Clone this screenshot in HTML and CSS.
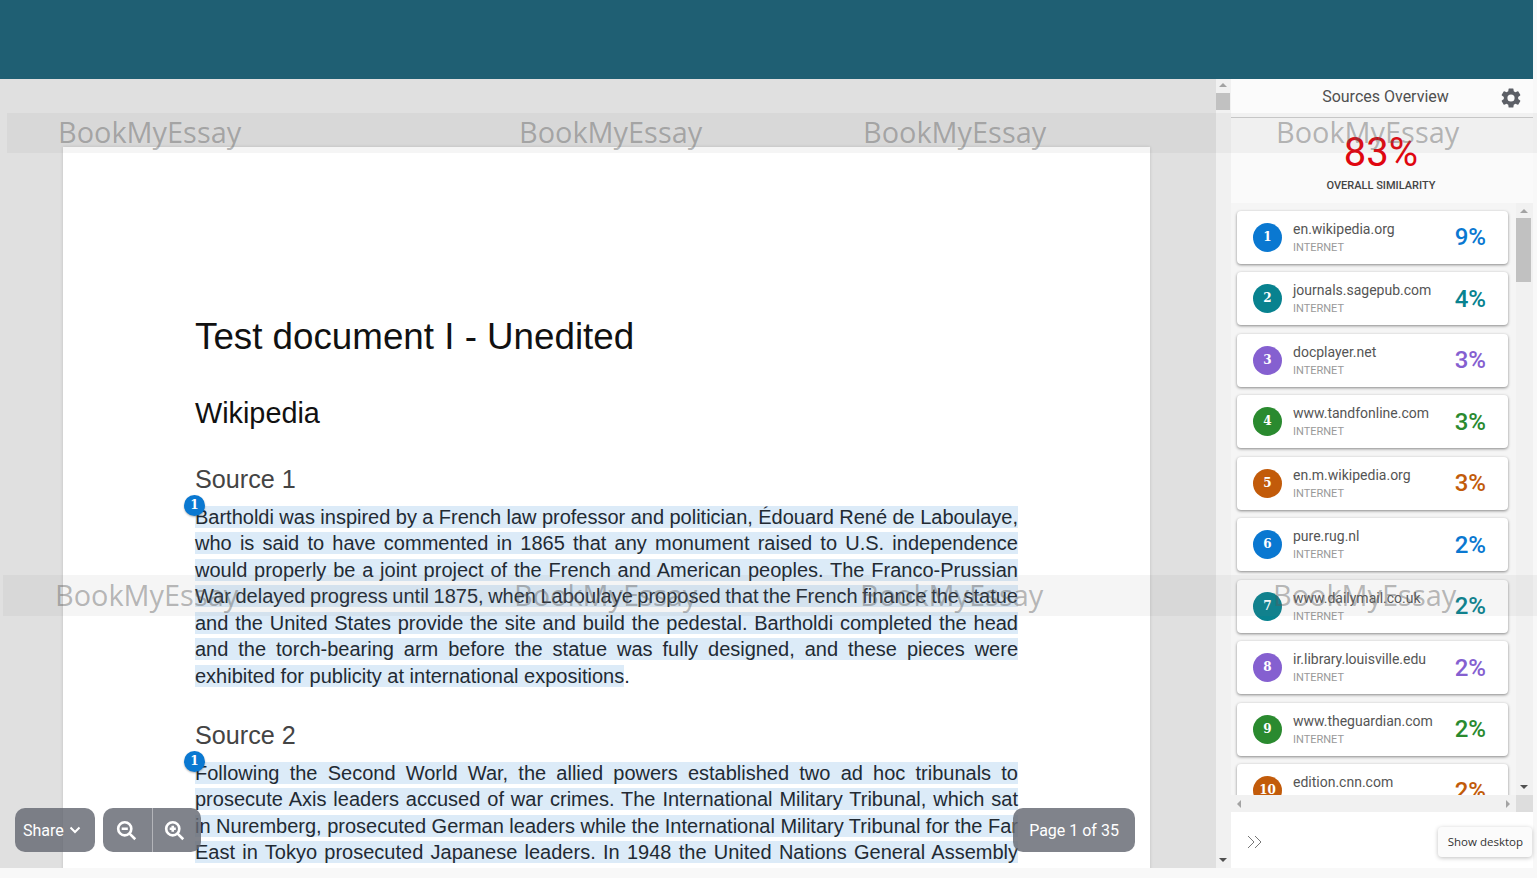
FILE: index.html
```html
<!DOCTYPE html>
<html lang="en">
<head>
<meta charset="utf-8">
<title>Sources Overview</title>
<link rel="stylesheet" href="styles.css">
</head>
<body>
<div class="app">
  <header class="topbar"></header>
  <main class="workspace">
    <section class="viewer">
      <article class="paper">
        <h1 class="title">Test document I - Unedited</h1>
        <h2 class="subtitle">Wikipedia</h2>
        <h3 class="source-head">Source 1</h3>
        <div class="para">
          <span class="badge">1</span>
          <div class="line snug"><span class="hl">Bartholdi was inspired by a French law professor and politician, Édouard René de Laboulaye,</span></div>
          <div class="line"><span class="hl">who is said to have commented in 1865 that any monument raised to U.S. independence</span></div>
          <div class="line"><span class="hl">would properly be a joint project of the French and American peoples. The Franco-Prussian</span></div>
          <div class="line tight"><span class="hl">War delayed progress until 1875, when Laboulaye proposed that the French finance the statue</span></div>
          <div class="line"><span class="hl">and the United States provide the site and build the pedestal. Bartholdi completed the head</span></div>
          <div class="line"><span class="hl">and the torch-bearing arm before the statue was fully designed, and these pieces were</span></div>
          <div class="line last"><span class="hl">exhibited for publicity at international expositions</span>.</div>
        </div>
        <h3 class="source-head second">Source 2</h3>
        <div class="para">
          <span class="badge">1</span>
          <div class="line"><span class="hl">Following the Second World War, the allied powers established two ad hoc tribunals to</span></div>
          <div class="line"><span class="hl">prosecute Axis leaders accused of war crimes. The International Military Tribunal, which sat</span></div>
          <div class="line snug"><span class="hl">in Nuremberg, prosecuted German leaders while the International Military Tribunal for the Far</span></div>
          <div class="line"><span class="hl">East in Tokyo prosecuted Japanese leaders. In 1948 the United Nations General Assembly</span></div>
        </div>
      </article>
    </section>
    <div class="vbar main-bar">
      <span class="arrow up"></span>
      <span class="thumb main-thumb"></span>
      <span class="spacer"></span>
      <span class="arrow down"></span>
    </div>
    <aside class="sidebar">
      <div class="side-head">
        <span class="side-title">Sources Overview</span>
        <svg class="gear" viewBox="0 0 24 24" aria-hidden="true"><path d="M19.14 12.94c.04-.3.06-.61.06-.94s-.02-.64-.07-.94l2.03-1.58a.49.49 0 0 0 .12-.61l-1.92-3.32a.49.49 0 0 0-.59-.22l-2.39.96a7 7 0 0 0-1.62-.94l-.36-2.54a.48.48 0 0 0-.48-.41h-3.84a.48.48 0 0 0-.47.41l-.36 2.54c-.59.24-1.13.57-1.62.94l-2.39-.96a.49.49 0 0 0-.59.22L2.73 8.87a.48.48 0 0 0 .12.61l2.03 1.58c-.05.3-.08.63-.08.94s.02.64.07.94l-2.03 1.58a.49.49 0 0 0-.12.61l1.92 3.32c.12.22.37.29.59.22l2.39-.96c.5.38 1.03.7 1.62.94l.36 2.54c.05.24.24.41.48.41h3.84c.24 0 .44-.17.47-.41l.36-2.54c.59-.24 1.13-.56 1.62-.94l2.39.96c.22.08.47 0 .59-.22l1.92-3.32a.48.48 0 0 0-.12-.61zM12 15.6A3.6 3.6 0 1 1 12 8.4a3.6 3.6 0 0 1 0 7.2z"/></svg>
      </div>
      <div class="summary">
        <div class="score">83%</div>
        <div class="score-label">OVERALL SIMILARITY</div>
      </div>
      <div class="list-wrap">
        <div class="list">
          <div class="card c-blue"><span class="num">1</span><div class="info"><div class="domain">en.wikipedia.org</div><div class="kind">INTERNET</div></div><span class="pct">9%</span></div>
          <div class="card c-teal"><span class="num">2</span><div class="info"><div class="domain">journals.sagepub.com</div><div class="kind">INTERNET</div></div><span class="pct">4%</span></div>
          <div class="card c-purple"><span class="num">3</span><div class="info"><div class="domain">docplayer.net</div><div class="kind">INTERNET</div></div><span class="pct">3%</span></div>
          <div class="card c-green"><span class="num">4</span><div class="info"><div class="domain">www.tandfonline.com</div><div class="kind">INTERNET</div></div><span class="pct">3%</span></div>
          <div class="card c-orange"><span class="num">5</span><div class="info"><div class="domain">en.m.wikipedia.org</div><div class="kind">INTERNET</div></div><span class="pct">3%</span></div>
          <div class="card c-blue"><span class="num">6</span><div class="info"><div class="domain">pure.rug.nl</div><div class="kind">INTERNET</div></div><span class="pct">2%</span></div>
          <div class="card c-teal"><span class="num">7</span><div class="info"><div class="domain">www.dailymail.co.uk</div><div class="kind">INTERNET</div></div><span class="pct">2%</span></div>
          <div class="card c-purple"><span class="num">8</span><div class="info"><div class="domain">ir.library.louisville.edu</div><div class="kind">INTERNET</div></div><span class="pct">2%</span></div>
          <div class="card c-green"><span class="num">9</span><div class="info"><div class="domain">www.theguardian.com</div><div class="kind">INTERNET</div></div><span class="pct">2%</span></div>
          <div class="card c-orange"><span class="num">10</span><div class="info"><div class="domain">edition.cnn.com</div><div class="kind">INTERNET</div></div><span class="pct">2%</span></div>
        </div>
        <div class="vbar list-bar">
          <span class="arrow up"></span>
          <span class="thumb list-thumb"></span>
          <span class="spacer"></span>
          <span class="arrow down"></span>
        </div>
        <div class="hbar">
          <span class="arrow left"></span>
          <span class="spacer"></span>
          <span class="arrow right"></span>
        </div>
        <div class="corner"></div>
      </div>
      <div class="side-foot">
        <svg class="collapse" viewBox="0 0 16 14" aria-hidden="true"><path d="M1 1l6 6-6 6M8 1l6 6-6 6"/></svg>
        <span class="show-desktop">Show desktop</span>
      </div>
    </aside>
  </main>
</div>

<div class="band band-top">
  <span class="mark m1">BookMyEssay</span>
  <span class="mark m2">BookMyEssay</span>
  <span class="mark m3">BookMyEssay</span>
  <span class="mark m4">BookMyEssay</span>
</div>
<div class="band band-mid">
  <span class="mark n1">BookMyEssay</span>
  <span class="mark n2">BookMyEssay</span>
  <span class="mark n3">BookMyEssay</span>
  <span class="mark n4">BookMyEssay</span>
</div>

<div class="float share">Share
  <svg class="chev" viewBox="0 0 12 8" aria-hidden="true"><path d="M1.5 1.5L6 6l4.5-4.5"/></svg>
</div>
<div class="float zoom">
  <span class="zoom-btn">
    <svg viewBox="0 0 24 24" aria-hidden="true"><circle cx="10" cy="10" r="7.5"/><path d="M15.5 15.5L22 22M6.5 10h7"/></svg>
  </span>
  <span class="zoom-btn divided">
    <svg viewBox="0 0 24 24" aria-hidden="true"><circle cx="10" cy="10" r="7.5"/><path d="M15.5 15.5L22 22M6.5 10h7M10 6.5v7"/></svg>
  </span>
</div>
<div class="float pager">Page 1 of 35</div>
</body>
</html>
```

FILE: styles.css
```css
* { box-sizing: border-box; }

html, body {
  margin: 0;
  height: 100%;
  overflow: hidden;
  background: #f8f8f8;
  font-family: Roboto, "Liberation Sans", sans-serif;
}

.app {
  width: 1533px;
  height: 868px;
  display: flex;
  flex-direction: column;
}

.topbar {
  height: 79px;
  flex: none;
  background: #1f5f73;
}

.workspace {
  flex: 1;
  min-height: 0;
  display: flex;
}

/* document */
.viewer {
  width: 1216px;
  flex: none;
  background: #e0e0e0;
  padding: 68px 66px 0 63px;
  overflow: hidden;
}

.paper {
  width: 1087px;
  height: 800px;
  background: #fff;
  padding: 168px 132px 0;
  font-family: "Liberation Sans", Arial, sans-serif;
  box-shadow: 0 0 3px rgba(0, 0, 0, .15);
}

.title {
  margin: 0;
  font-size: 36.75px;
  line-height: 44px;
  font-weight: 400;
  color: #111;
}

.subtitle {
  margin: 36px 0 0;
  font-size: 28.8px;
  line-height: 36px;
  font-weight: 400;
  color: #111;
}

.source-head {
  margin: 32px 0 0;
  font-size: 25.2px;
  line-height: 32px;
  font-weight: 400;
  color: #444;
}

.source-head.second {
  margin-top: 29.5px;
}

.para {
  position: relative;
  margin: 8.8px 0 0;
  font-size: 20px;
  line-height: 26.5px;
  color: #222a33;
}

.line {
  white-space: nowrap;
  text-align: justify;
  text-align-last: justify;
}

.line.last { text-align-last: left; }
.line.snug { word-spacing: -.6px; }
.line.tight { word-spacing: -1.8px; }

.hl {
  background: #dcebf8;
}

.badge {
  position: absolute;
  left: -11px;
  top: -9px;
  width: 21px;
  height: 21px;
  border-radius: 50%;
  background: #0a78d1;
  color: #fff;
  font: 700 12px/20px "DejaVu Serif", serif;
  text-align: center;
  box-shadow: 0 1px 2px rgba(0, 0, 0, .3);
}

/* scrollbars */
.vbar {
  display: flex;
  flex-direction: column;
  align-items: center;
  background: #f1f1f1;
}

.main-bar {
  width: 15px;
  flex: none;
  padding: 4px 1px 6px 0;
}

.spacer { flex: 1; }

.arrow {
  width: 0;
  height: 0;
  flex: none;
  border: 4px solid transparent;
}

.arrow.up { border-top: 0; border-bottom: 4px solid #a3a3a3; }
.arrow.down { border-bottom: 0; border-top: 4px solid #505050; }
.arrow.left { border-left: 0; border-right: 4px solid #a3a3a3; }
.arrow.right { border-right: 0; border-left: 4px solid #a3a3a3; }

.thumb {
  flex: none;
  width: 100%;
  background: #c1c1c1;
}

.main-thumb { height: 17px; margin-top: 6px; }

/* sidebar */
.sidebar {
  flex: 1;
  min-width: 0;
  display: flex;
  flex-direction: column;
  background: #fafafa;
}

.side-head {
  height: 39px;
  flex: none;
  display: flex;
  align-items: center;
  padding: 0 10px 0 41px;
  background: #fbfbfb;
  border-bottom: 1px solid #ccc;
}

.side-title {
  flex: 1;
  margin-bottom: 4px;
  text-align: center;
  font-size: 16px;
  color: #505050;
}

.gear {
  width: 24px;
  height: 24px;
  fill: #5c5f66;
}

.summary {
  height: 85px;
  flex: none;
  padding-right: 2px;
  text-align: center;
}

.score {
  padding-top: 12px;
  font-size: 40px;
  line-height: 46px;
  color: #e0060f;
}

.score-label {
  margin-top: 3px;
  font-size: 11px;
  line-height: 14px;
  font-weight: 500;
  color: #444;
}

.list-wrap {
  flex: 1;
  min-height: 0;
  display: grid;
  grid-template-columns: 1fr 17px;
  grid-template-rows: minmax(0, 1fr) 17px;
  background: #f5f5f5;
}

.list {
  overflow: hidden;
  display: flex;
  flex-direction: column;
  gap: 8.5px;
  padding: 7.8px 8px 0 6px;
}

.card {
  flex: none;
  height: 53px;
  display: flex;
  align-items: center;
  padding: 0 22px 0 16px;
  background: #fff;
  border-radius: 4px;
  box-shadow: 0 1px 3px rgba(0, 0, 0, .45);
}

.num {
  width: 29px;
  height: 29px;
  flex: none;
  border-radius: 50%;
  color: #fff;
  font: 700 12px/28px "DejaVu Serif", serif;
  text-align: center;
}

.info {
  flex: 1;
  min-width: 0;
  margin-left: 11px;
}

.domain {
  font-size: 14px;
  line-height: 18px;
  color: #555;
}

.kind {
  font-size: 11px;
  line-height: 15px;
  margin-top: 2px;
  color: #999;
}

.pct {
  font-size: 24px;
  line-height: 30px;
  font-weight: 500;
}

.c-blue .num { background: #0a78d1; }
.c-blue .pct { color: #0a78d1; }
.c-teal .num { background: #08828f; }
.c-teal .pct { color: #08828f; }
.c-purple .num { background: #8560d0; }
.c-purple .pct { color: #8560d0; }
.c-green .num { background: #2a8a2f; }
.c-green .pct { color: #2a8a2f; }
.c-orange .num { background: #c25b0a; }
.c-orange .pct { color: #c25b0a; }

.list-bar {
  padding: 6px 2px 6px 0;
}

.list-thumb {
  height: 64px;
  margin-top: 5px;
}

.hbar {
  display: flex;
  align-items: center;
  padding: 0 6px;
  background: #f1f1f1;
}

.corner { background: #ddd; }

.side-foot {
  height: 56px;
  flex: none;
  display: flex;
  align-items: center;
  justify-content: space-between;
  padding: 4px 1px 0 16px;
  background: #fff;
}

.collapse {
  width: 16px;
  height: 14px;
  fill: none;
  stroke: #777;
  stroke-width: 1;
}

.show-desktop {
  height: 30px;
  padding: 0 9px 0 10px;
  font: 11.5px/30px "Open Sans", "Noto Sans", sans-serif;
  color: #333;
  background: #fbfbfb;
  border-radius: 4px;
  box-shadow: 0 1px 4px rgba(0, 0, 0, .25);
}

/* watermark overlays */
.band {
  position: absolute;
  right: 0;
  background: rgba(130, 130, 130, .08);
  pointer-events: none;
}

.band-top { top: 113px; left: 7px; height: 40px; }
.band-mid { top: 575px; left: 3px; height: 41px; }

.mark {
  position: absolute;
  top: 0;
  font: 28.9px/38px "Open Sans", "Noto Sans", sans-serif;
  color: rgba(90, 90, 90, .42);
  white-space: nowrap;
}

.band-mid .mark { line-height: 40px; }

.m1 { left: 51px; }
.m2 { left: 512px; }
.m3 { left: 856px; }
.m4 { left: 1269px; }
.n1 { left: 52px; }
.n2 { left: 511px; }
.n3 { left: 857px; }
.n4 { left: 1270px; }

/* floating controls */
.float {
  position: absolute;
  top: 808px;
  height: 44px;
  display: flex;
  align-items: center;
  border-radius: 10px;
  background: rgba(100, 104, 114, .82);
  color: #fff;
  font-size: 16px;
}

.share {
  left: 15px;
  width: 80px;
  padding-left: 8px;
  gap: 5px;
}

.chev {
  width: 12px;
  height: 8px;
  fill: none;
  stroke: #fff;
  stroke-width: 2;
}

.zoom {
  left: 103px;
  width: 98px;
}

.zoom-btn {
  width: 49px;
  flex: none;
  height: 100%;
  display: flex;
  align-items: center;
  justify-content: center;
  padding-right: 2px;
}

.zoom-btn.divided {
  border-left: 1px solid rgba(255, 255, 255, .4);
  padding-right: 5px;
}

.zoom-btn svg {
  width: 21px;
  height: 21px;
  fill: none;
  stroke: #fff;
  stroke-width: 3;
}

.pager {
  left: 1013px;
  width: 122px;
  justify-content: center;
}
```
